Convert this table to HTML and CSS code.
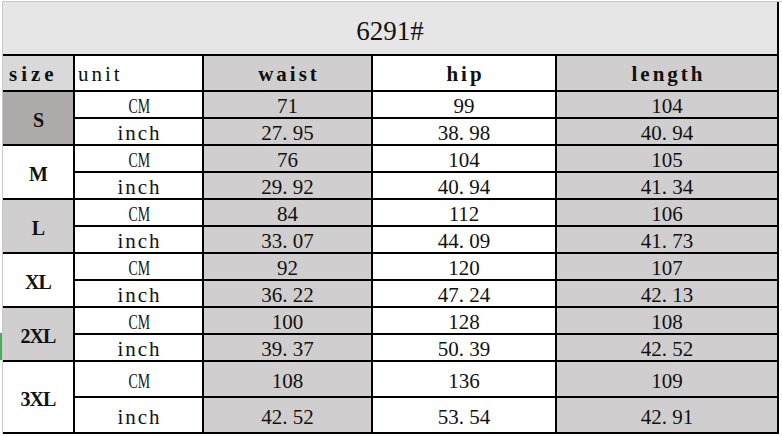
FILE: index.html
```html
<!DOCTYPE html>
<html>
<head>
<meta charset="utf-8">
<title>6291# size chart</title>
<link rel="stylesheet" href="styles.css">
</head>
<body>
<div class="sheet">
  <div class="select-mark"></div>
  <div class="grid">
    <div class="c title">6291#</div>

    <div class="c hd size-hd">size</div>
    <div class="c unit-hd">unit</div>
    <div class="c hd gray">waist</div>
    <div class="c hd">hip</div>
    <div class="c hd gray">length</div>

    <div class="c lbl dark">S</div>
    <div class="c u"><span class="cm">CM</span></div>
    <div class="c n gray">71</div>
    <div class="c n">99</div>
    <div class="c n gray">104</div>
    <div class="c u">inch</div>
    <div class="c n gray">27<span class="dot">.</span>95</div>
    <div class="c n">38<span class="dot">.</span>98</div>
    <div class="c n gray">40<span class="dot">.</span>94</div>

    <div class="c lbl">M</div>
    <div class="c u"><span class="cm">CM</span></div>
    <div class="c n gray">76</div>
    <div class="c n">104</div>
    <div class="c n gray">105</div>
    <div class="c u">inch</div>
    <div class="c n gray">29<span class="dot">.</span>92</div>
    <div class="c n">40<span class="dot">.</span>94</div>
    <div class="c n gray">41<span class="dot">.</span>34</div>

    <div class="c lbl gray">L</div>
    <div class="c u"><span class="cm">CM</span></div>
    <div class="c n gray">84</div>
    <div class="c n">112</div>
    <div class="c n gray">106</div>
    <div class="c u">inch</div>
    <div class="c n gray">33<span class="dot">.</span>07</div>
    <div class="c n">44<span class="dot">.</span>09</div>
    <div class="c n gray">41<span class="dot">.</span>73</div>

    <div class="c lbl">XL</div>
    <div class="c u"><span class="cm">CM</span></div>
    <div class="c n gray">92</div>
    <div class="c n">120</div>
    <div class="c n gray">107</div>
    <div class="c u">inch</div>
    <div class="c n gray">36<span class="dot">.</span>22</div>
    <div class="c n">47<span class="dot">.</span>24</div>
    <div class="c n gray">42<span class="dot">.</span>13</div>

    <div class="c lbl gray">2XL</div>
    <div class="c u"><span class="cm">CM</span></div>
    <div class="c n gray">100</div>
    <div class="c n">128</div>
    <div class="c n gray">108</div>
    <div class="c u">inch</div>
    <div class="c n gray">39<span class="dot">.</span>37</div>
    <div class="c n">50<span class="dot">.</span>39</div>
    <div class="c n gray">42<span class="dot">.</span>52</div>

    <div class="c lbl">3XL</div>
    <div class="c u"><span class="cm">CM</span></div>
    <div class="c n gray">108</div>
    <div class="c n">136</div>
    <div class="c n gray">109</div>
    <div class="c u">inch</div>
    <div class="c n gray">42<span class="dot">.</span>52</div>
    <div class="c n">53<span class="dot">.</span>54</div>
    <div class="c n gray">42<span class="dot">.</span>91</div>
  </div>
</div>
</body>
</html>
```

FILE: styles.css
```css
html, body {
  margin: 0;
  padding: 0;
  background: #ffffff;
}

body {
  padding-top: 1px;
  font-family: "Liberation Serif", "Times New Roman", serif;
  color: #111;
}

.sheet {
  position: relative;
  margin-left: 2px;
  border-top: 1px solid #c9c9c9;
  border-left: 1px solid #c9c9c9;
  width: 780px;
}

.select-mark {
  position: absolute;
  left: -3px;
  top: 331px;
  width: 2px;
  height: 27px;
  background: #4fa85f;
}

.grid {
  display: grid;
  grid-template-columns: 72px 129px 169px 184px 222px;
  grid-template-rows: 54px 36px repeat(10, 27px) 36px 36px;
}

.c {
  box-sizing: border-box;
  border-right: 2px solid #000;
  border-bottom: 2px solid #000;
  display: flex;
  align-items: center;
  justify-content: center;
  background: #fff;
  white-space: nowrap;
}

.gray {
  background: #d0cece;
}

.dark {
  background: #aeaaaa;
}

.title {
  grid-column: 1 / -1;
  background: #e7e6e6;
  font-size: 27px;
  padding-top: 6px;
}

.hd {
  font-weight: bold;
  font-size: 21px;
  letter-spacing: 3px;
  padding-top: 3px;
  padding-left: 3px;
}

.size-hd {
  background: #d9d9d9;
  justify-content: flex-start;
  padding-left: 6px;
  letter-spacing: 4px;
}

.unit-hd {
  font-size: 21px;
  letter-spacing: 3px;
  justify-content: flex-start;
  padding-left: 3px;
  padding-top: 3px;
}

.lbl {
  grid-row: span 2;
  font-weight: bold;
  font-size: 20px;
  letter-spacing: -1px;
  padding-top: 4px;
}

.u {
  font-size: 21px;
  letter-spacing: 2px;
  padding-top: 4px;
  padding-left: 2px;
}

.cm {
  display: inline-block;
  font-size: 21px;
  letter-spacing: 0;
  transform: scaleX(0.66);
}

.n {
  font-size: 21px;
  padding-top: 4px;
}

.dot {
  display: inline-block;
  width: 0.5em;
}
```
